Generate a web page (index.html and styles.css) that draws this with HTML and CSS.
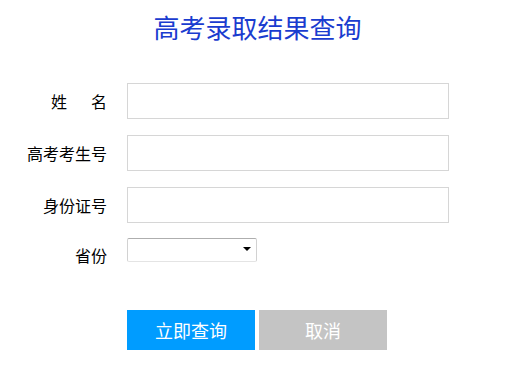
FILE: index.html
```html
<!DOCTYPE html>
<html lang="zh-CN">
<head>
    <meta charset="UTF-8">
    <meta name="viewport" content="width=device-width, initial-scale=1.0">
    <title>高考录取结果查询</title>
    <link rel="stylesheet" href="styles.css">
</head>
<body>
    <h1 class="title">高考录取结果查询</h1>

    <form class="query-form">
        <div class="form-row">
            <label class="form-label">姓&emsp;&ensp;名</label>
            <input type="text" class="form-input">
        </div>
        <div class="form-row">
            <label class="form-label">高考考生号</label>
            <input type="text" class="form-input">
        </div>
        <div class="form-row">
            <label class="form-label">身份证号</label>
            <input type="text" class="form-input">
        </div>
        <div class="form-row row-province">
            <label class="form-label label-low">省份</label>
            <span class="select-wrap">
                <select class="form-select">
                    <option></option>
                </select>
            </span>
        </div>

        <div class="form-actions">
            <button type="button" class="btn btn-primary">立即查询</button>
            <button type="button" class="btn btn-cancel">取消</button>
        </div>
    </form>
</body>
</html>
```

FILE: styles.css
```css
* {
    margin: 0;
    padding: 0;
    box-sizing: border-box;
}

body {
    font-family: "Microsoft YaHei", "Noto Sans CJK SC", sans-serif;
    background: #fff;
    color: #000;
}

.title {
    font-size: 26px;
    line-height: 30px;
    font-weight: normal;
    color: #1a3ccf;
    text-align: center;
    padding-top: 12px;
    padding-left: 4px;
    height: 83px;
}

.query-form {
    display: flex;
    flex-direction: column;
    gap: 16px;
}

.form-row {
    display: flex;
    align-items: center;
}

.row-province {
    margin-top: -1px;
}

.form-label {
    width: 107px;
    margin-right: 20px;
    text-align: right;
    font-size: 16px;
    line-height: 20px;
}

.label-low {
    position: relative;
    top: 5px;
}

.form-input {
    width: 322px;
    height: 36px;
    border: 1px solid #d6d6d6;
    outline: none;
    font-size: 14px;
    padding: 0 8px;
}

/* select with a small black triangle */
.select-wrap {
    position: relative;
    display: block;
    width: 130px;
    height: 24px;
}

.select-wrap:after {
    content: '';
    position: absolute;
    top: 9px;
    right: 6px;
    border-left: 4px solid transparent;
    border-right: 4px solid transparent;
    border-top: 4px solid #000;
    pointer-events: none;
}

.form-select {
    appearance: none;
    -webkit-appearance: none;
    display: block;
    width: 130px;
    height: 24px;
    background: #fff;
    border: 1px solid #d2d2d2;
    border-top-color: #aeaeae;
    border-bottom-color: #e4e4e4;
    border-radius: 2px;
    font-size: 13px;
    outline: none;
}

.form-actions {
    display: flex;
    gap: 4px;
    margin-left: 127px;
    margin-top: 32px;
}

.btn {
    width: 128px;
    height: 40px;
    border: none;
    color: #fff;
    font-family: inherit;
    font-size: 18px;
    cursor: pointer;
}

.btn-primary {
    background: #009cff;
}

.btn-cancel {
    background: #c4c4c4;
}
```
